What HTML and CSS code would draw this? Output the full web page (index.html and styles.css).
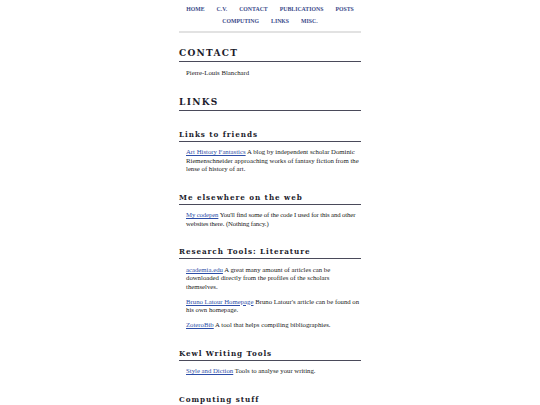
FILE: index.html
```html
<!DOCTYPE html>
<html lang="en">
<head>
<meta charset="utf-8">
<title>Links</title>
<link rel="stylesheet" href="styles.css">
</head>
<body>
<div class="page">
  <nav class="nav">
    <div class="nav-row">
      <a href="#">Home</a><a href="#">C.V.</a><a href="#">Contact</a><a href="#">Publications</a><a href="#">Posts</a>
    </div>
    <div class="nav-row">
      <a href="#">Computing</a><a href="#">Links</a><a href="#">Misc.</a>
    </div>
  </nav>
  <main class="content">
    <h2 class="h2">Contact</h2>
    <p class="txt">Pierre-Louis Blanchard</p>

    <h2 class="h2">Links</h2>

    <h3 class="h3">Links to friends</h3>
    <p class="txt"><a href="#">Art History Fantastics</a> A blog by independent scholar Dominic Riemenschneider approaching works of fantasy fiction from the lense of history of art.</p>

    <h3 class="h3">Me elsewhere on the web</h3>
    <p class="txt txt-tight"><a href="#">My codepen</a> You'll find some of the code I used for this and other websites there. (Nothing fancy.)</p>

    <h3 class="h3">Research Tools: Literature</h3>
    <p class="txt"><a href="#">academia.edu</a> A great many amount of articles can be downloaded directly from the profiles of the scholars themselves.</p>
    <p class="txt"><a href="#">Bruno Latour Homepage</a> Bruno Latour's article can be found on his own homepage.</p>
    <p class="txt"><a href="#">ZoteroBib</a> A tool that helps compiling bibliographies.</p>

    <h3 class="h3">Kewl Writing Tools</h3>
    <p class="txt"><a href="#">Style and Diction</a> Tools to analyse your writing.</p>

    <h3 class="h3">Computing stuff</h3>
  </main>
</div>
</body>
</html>
```
FILE: styles.css
```css
html, body {
  margin: 0;
  padding: 0;
  background: #ffffff;
}
body {
  font-family: "Liberation Serif", "DejaVu Serif", serif;
  color: #222222;
  overflow: hidden;
}
.page {
  width: 182px;
  margin: 0 auto;
  padding-top: 3px;
}
.nav {
  border-bottom: 2px solid #e2e2e2;
  padding-bottom: 4px;
}
.nav-row {
  display: flex;
  justify-content: center;
  gap: 12px;
  line-height: 12px;
}
.nav-row a {
  font-size: 5.8px;
  text-transform: uppercase;
  color: #3a4a8a;
  text-decoration: none;
  font-weight: bold;
}
.content {
  padding-top: 1px;
}
.h2 {
  font-family: "DejaVu Serif Condensed", "Liberation Serif", serif;
  font-weight: bold;
  font-size: 10px;
  letter-spacing: 1.3px;
  text-transform: uppercase;
  color: #1c1c2c;
  line-height: 12px;
  margin: 13px 0 0 0;
  padding-bottom: 2px;
  border-bottom: 1.5px solid #4a4a5a;
}
.h2 + .txt {
  margin-top: 7px;
}
.txt + .h2 {
  margin-top: 18px;
}
.h3 {
  font-family: "DejaVu Serif Condensed", "Liberation Serif", serif;
  font-weight: bold;
  font-size: 8px;
  letter-spacing: 0.95px;
  color: #1c1c2c;
  line-height: 10px;
  margin: 18px 0 0 0;
  padding-bottom: 2px;
  border-bottom: 1.5px solid #4a4a5a;
}
.txt {
  font-size: 6.75px;
  line-height: 8.5px;
  margin: 6.5px 0;
  padding-left: 7px;
  padding-right: 0;
}
.txt-tight {
  letter-spacing: -0.12px;
}
.txt a {
  color: #2d4ea8;
  text-decoration: underline;
}
```
